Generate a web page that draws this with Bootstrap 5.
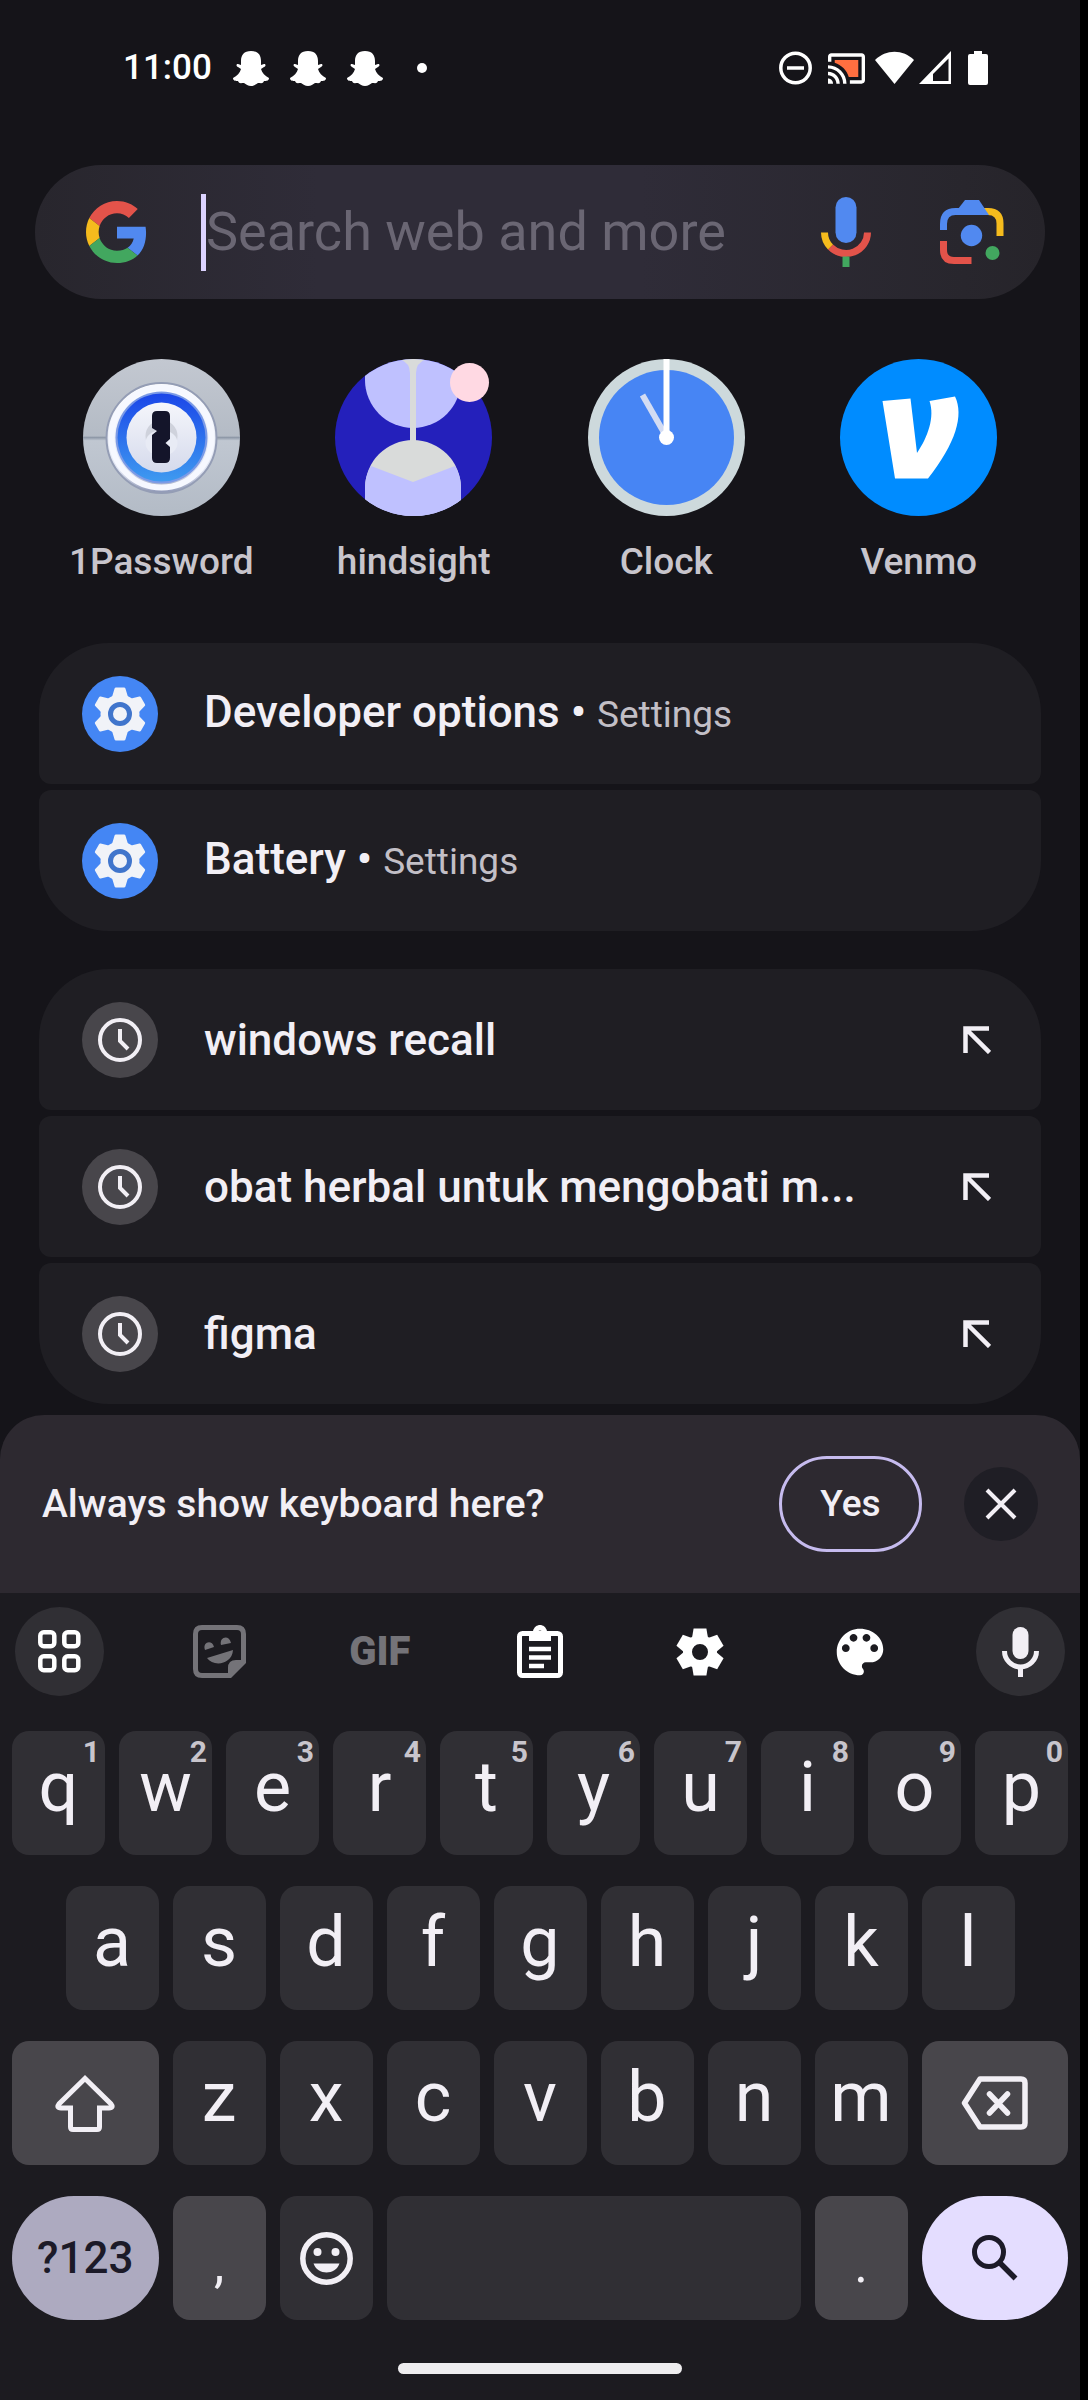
<!DOCTYPE html>
<html lang="en">
<head>
<meta charset="utf-8">
<meta name="viewport" content="width=device-width, initial-scale=1">
<title>Phone search</title>
<link href="https://cdn.jsdelivr.net/npm/bootstrap@5.3.0/dist/css/bootstrap.min.css" rel="stylesheet">
<style>
body { background: #000; color: #f2eff5; font-family: Roboto, "Noto Sans", sans-serif; }
svg { display: block; flex: none; }
button { border: 0; color: inherit; padding: 0; }
.device { background: #151419; margin-right: 8px; min-height: 100vh; }
.statusbar { height: 136px; padding: 0 92px 0 123px; color: #fff; }
.clock-text { font-size: 35px; font-weight: 500; line-height: 40px; }
.notices { gap: 21px; }
.status-dot { width: 10px; height: 10px; margin-left: 13px; background: #fff; }
.gutter { padding-left: 35px; padding-right: 35px; }
.searchbar { margin-top: 29px; height: 134px; padding: 0 41px 0 51px; background: linear-gradient(90deg, #28262d, #2f2c38 28%, #2f2c38 60%, #28262d 92%, #26242a); }
.caret { width: 5px; height: 77px; margin-left: 53px; background: #dcd3ff; flex: none; }
.searchbar input { background: none; border: 0; outline: 0; padding: 0; min-width: 0; font-size: 54px; line-height: 70px; color: #f2eff5; }
.searchbar input::placeholder { color: #6a6673; opacity: 1; }
.search-tools { gap: 69px; }
.apps { padding-top: 60px; }
.app-link { color: #c8c5cc; font-size: 37px; font-weight: 500; line-height: 44px; text-decoration: none; }
.app-name { margin-top: 24px; }
.notify { width: 39px; height: 39px; background: #ffd9e3; right: 3px; top: 4px; }
.results { padding: 59px 39px 0; gap: 38px; }
.result-group { gap: 6px; }
.result { background: #1f1e23; color: #f2eff5; height: 141px; padding: 0 50px 0 43px; gap: 46px; border-radius: 12px; font-size: 44px; font-weight: 500; line-height: 60px; text-decoration: none; }
.result-group .result:first-child { border-top-left-radius: 70px; border-top-right-radius: 70px; }
.result-group .result:last-child { border-bottom-left-radius: 70px; border-bottom-right-radius: 70px; }
.origin { color: #c2bfc6; font-size: 37px; font-weight: 400; }
.prompt-bar { margin-top: 11px; height: 178px; padding: 0 42px; background: #2d2930; border-radius: 44px 44px 0 0; font-size: 39px; font-weight: 500; }
.yes-btn { width: 143px; height: 96px; border: 3px solid #c6bbee; border-radius: 48px; background: none; margin-right: 42px; font-size: 37px; font-weight: 500; }
.close-btn { width: 74px; height: 74px; background: #1f1e25; }
.keyboard { background: #1c1b20; }
.tools { padding: 14px 15px 35px; }
.tool-btn { width: 89px; height: 89px; background: none; color: #fff; }
.tool-round { background: #302f34; }
.tool-dim { color: #747378; }
.gif-text { font-size: 40px; font-weight: 900; }
.keys { display: grid; grid-template-columns: repeat(20, minmax(0, 1fr)); gap: 31px 14px; padding: 0 12px; }
.key { grid-column: span 2; height: 124px; border-radius: 17px; background: #302f34; font-size: 70px; line-height: 84px; padding-bottom: 12px; }
.key-indent { grid-column: 2 / span 2; }
.key-first { grid-column: 1 / span 3; }
.key-wide { grid-column: span 3; }
.key-space { grid-column: span 8; }
.key-icon { padding-bottom: 0; }
.key-alt { background: #48464b; }
.key-punct { font-size: 52px; padding: 14px 0 0; }
.key-mode { background: #adaac0; color: #1c1a28; border-radius: 62px; font-size: 44px; font-weight: 500; padding-bottom: 0; }
.key-go { background: #e4ddff; color: #1c1a28; border-radius: 62px; padding-bottom: 0; }
.hint { top: 3px; right: 5px; font-size: 30px; line-height: 36px; font-weight: 700; color: #c8c5cc; }
.home-handle { width: 284px; height: 11px; background: #eeedef; margin: 43px auto 26px; }
</style>
<script src="https://cdn.jsdelivr.net/npm/bootstrap@5.3.0/dist/js/bootstrap.bundle.min.js"></script>
</head>
<body>
<svg width="0" height="0" class="position-absolute" aria-hidden="true">
  <defs>
    <symbol id="ghost" viewBox="0 0 36 35"><path fill="#fff" d="M18 0C11 0 8 4 8 10v4l-3-1c-2 0-2 2 0 3l3 2c-1 4-4 7-8 9 0 3 3 3 5 3 1 3 3 2 6 2 2 1 4 3 7 3s5-2 7-3c3 0 5 1 6-2 2 0 5 0 5-3-4-2-7-5-8-9l3-2c2-1 2-3 0-3l-3 1v-4C28 4 25 0 18 0z"/></symbol>
    <symbol id="gear" viewBox="-24 -24 48 48">
      <circle r="12.500" fill="none" stroke="currentColor" stroke-width="9"/>
      <g fill="currentColor"><path id="tooth" d="M-6.400-23.500H6.400L8-14H-8z"/><use href="#tooth" transform="rotate(60)"/><use href="#tooth" transform="rotate(120)"/><use href="#tooth" transform="rotate(180)"/><use href="#tooth" transform="rotate(240)"/><use href="#tooth" transform="rotate(300)"/></g>
    </symbol>
    <symbol id="settings-app" viewBox="0 0 76 76">
      <circle cx="38" cy="38" r="38" fill="#4486f4"/>
      <g transform="translate(38 38)" fill="#f1f3f8" stroke="#f1f3f8" stroke-linejoin="round" stroke-width="3"><circle r="18"/><path id="cog" d="M-4-25H4L7-15H-7z"/><use href="#cog" transform="rotate(60)"/><use href="#cog" transform="rotate(120)"/><use href="#cog" transform="rotate(180)"/><use href="#cog" transform="rotate(240)"/><use href="#cog" transform="rotate(300)"/></g>
      <circle cx="38" cy="38" r="9.500" fill="#f1f3f8" stroke="#4075cc" stroke-width="5"/>
    </symbol>
    <symbol id="history" viewBox="0 0 76 76"><circle cx="38" cy="38" r="38" fill="#48464b"/><circle cx="38" cy="38" r="20" fill="none" stroke="#f2eff5" stroke-width="4"/><path d="M38 27v12l8 8" fill="none" stroke="#f2eff5" stroke-width="4"/></symbol>
    <symbol id="arrow-nw" viewBox="0 0 28 28"><path d="M2.500 27V2.500H26M2.500 2.500l24 24" fill="none" stroke="#f2eff5" stroke-width="4.500"/></symbol>
  </defs>
</svg>

<div class="device d-flex flex-column">
  <header class="statusbar d-flex align-items-center justify-content-between">
    <div class="notices d-flex align-items-center">
      <span class="clock-text">11:00</span>
      <svg width="36" height="35"><use href="#ghost"/></svg>
      <svg width="36" height="35"><use href="#ghost"/></svg>
      <svg width="36" height="35"><use href="#ghost"/></svg>
      <span class="status-dot rounded-circle"></span>
    </div>
    <div class="d-flex align-items-center">
      <svg width="33" height="34" viewBox="0 0 33 34"><circle cx="16.500" cy="17" r="14.700" fill="none" stroke="#fff" stroke-width="3.500"/><path d="M8 17h17" stroke="#fff" stroke-width="3.500"/></svg>
      <svg class="ms-3" width="37" height="31" viewBox="1 3 22 18"><path fill="#ff6f40" d="M19 7H5v1.630c3.960 1.280 7.090 4.410 8.370 8.370H19V7z"/><path fill="#fff" d="M1 18v3h3c0-1.660-1.340-3-3-3zm0-4v2c2.760 0 5 2.240 5 5h2c0-3.870-3.130-7-7-7zm0-4v2c4.970 0 9 4.030 9 9h2c0-6.080-4.930-11-11-11zm20-7H3c-1.100 0-2 .9-2 2v3h2V5h18v14h-7v2h7c1.100 0 2-.9 2-2V5c0-1.100-.9-2-2-2z"/></svg>
      <svg class="ms-2" width="42" height="34" viewBox="0 0 42 34"><path d="M2 9C13-2 30-2 41 9L21.500 33z" fill="#fff"/></svg>
      <svg class="ms-1" width="33" height="34" viewBox="0 0 33 34"><path fill="#fff" fill-rule="evenodd" d="M0 33 32 0v33zM14 30h15.500V7.500L14 23z"/></svg>
      <svg class="ms-3" width="20" height="34" viewBox="0 0 20 34"><path d="M6 0h8v3h4q2 0 2 2v27q0 2-2 2H2q-2 0-2-2V5q0-2 2-2h4z" fill="#fff"/></svg>
    </div>
  </header>

  <div class="gutter">
    <form class="searchbar d-flex align-items-center rounded-pill">
      <svg width="62" height="62" viewBox="1.500 0 45 48"><path fill="#e3534a" d="M24 9.500c3.540 0 6.710 1.220 9.210 3.600l6.850-6.850C35.900 2.380 30.470 0 24 0 14.620 0 6.510 5.380 2.560 13.220l7.980 6.190C12.430 13.720 17.740 9.500 24 9.500z"/><path fill="#5189f0" d="M46.500 24.550c0-1.570-.15-3.090-.38-4.550H24v9.020h12.940c-.58 2.960-2.260 5.480-4.780 7.180l7.730 6c4.510-4.180 6.610-10.360 6.610-17.650z"/><path fill="#f5bb1d" d="M10.530 28.590c-.48-1.450-.76-2.990-.76-4.590s.27-3.140.76-4.590l-7.980-6.190C.92 16.460 0 20.120 0 24s.92 7.540 2.560 10.780l7.970-6.190z"/><path fill="#42a75f" d="M24 48c6.480 0 11.930-2.130 15.890-5.810l-7.730-6c-2.150 1.450-4.920 2.300-8.160 2.300-6.260 0-11.570-4.220-13.470-9.910l-7.980 6.190C6.510 42.620 14.620 48 24 48z"/></svg>
      <span class="caret"></span>
      <input class="flex-grow-1" type="search" placeholder="Search web and more" aria-label="Search web and more">
      <div class="search-tools d-flex align-items-center">
        <button type="button" class="bg-transparent" aria-label="Voice search">
          <svg width="50" height="70" viewBox="0 0 50 70"><rect x="14.500" width="21" height="46" rx="10.500" fill="#5189f0"/><g fill="none" stroke-width="7"><path d="M46.500 35.500a21.500 21 0 0 1-37 14.500" stroke="#e3534a"/><path d="M3.500 35.500a21.500 21 0 0 0 6 14.500" stroke="#f5bb1d"/><path d="M25 59.500V70" stroke="#42a75f"/></g></svg>
        </button>
        <button type="button" class="bg-transparent" aria-label="Lens">
          <svg width="64" height="64" viewBox="0 0 64 64"><g fill="none" stroke-width="7"><path d="M44 11.500h4q12 0 12 12V36" stroke="#f5bb1d"/><path d="M3.500 41v9q0 10.500 10.500 10.500h17.500" stroke="#e3534a"/><path d="M3.500 30v-6q0-12.500 12-12.500H40" stroke="#5189f0"/></g><path d="M18 9 25 0h14l10 15H18z" fill="#5189f0"/><circle cx="31.500" cy="35.500" r="10.700" fill="#5189f0"/><circle cx="52.500" cy="53" r="7" fill="#42a75f"/></svg>
        </button>
      </div>
    </form>

    <nav class="apps row g-0 text-center" aria-label="Apps">
      <a class="app-link col-3 d-flex flex-column align-items-center" href="#">
        <svg width="157" height="157" viewBox="0 0 157 157">
          <defs>
            <linearGradient id="plate" x2="0" y2="1"><stop offset="0" stop-color="#c3c8d1"/><stop offset=".49" stop-color="#b4bbc5"/><stop offset=".5" stop-color="#8f99a8"/><stop offset=".52" stop-color="#c0c7d1"/><stop offset="1" stop-color="#b3bbc6"/></linearGradient>
            <linearGradient id="rim" x2="0" y2="1"><stop offset="0" stop-color="#fff"/><stop offset=".8" stop-color="#dfe4f2"/><stop offset="1" stop-color="#8e97b5"/></linearGradient>
            <linearGradient id="dial" x2="0" y2="1"><stop offset="0" stop-color="#1b46e8"/><stop offset="1" stop-color="#3e9af0"/></linearGradient>
            <linearGradient id="face" x2="0" y2="1"><stop offset="0" stop-color="#f5f6fb"/><stop offset="1" stop-color="#d5daec"/></linearGradient>
          </defs>
          <circle cx="78.500" cy="78.500" r="78.500" fill="url(#plate)"/>
          <circle cx="78.500" cy="79" r="55" fill="url(#rim)" stroke="#949db5" stroke-width="2"/>
          <circle cx="78.500" cy="78.500" r="50" fill="none" stroke="#f6f8ff" stroke-width="6"/>
          <circle cx="78.500" cy="78.500" r="46" fill="#7b9ae6"/>
          <circle cx="78.500" cy="78.500" r="44" fill="url(#dial)"/>
          <circle cx="78.500" cy="78.500" r="35" fill="url(#face)"/>
          <circle cx="78.500" cy="77" r="16" fill="#cfd2dc"/><ellipse cx="78.500" cy="84" rx="16" ry="13" fill="#e8ebf5"/>
          <path fill="#14152a" d="M74 52h8q5 0 5 5v23l-4.500 4L87 88v11q0 5-5 5h-8q-5 0-5-5V76l5-4-5-3V57q0-5 5-5z"/>
        </svg>
        <span class="app-name">1Password</span>
      </a>
      <a class="app-link col-3 d-flex flex-column align-items-center" href="#">
        <span class="position-relative">
          <svg width="157" height="157" viewBox="0 0 157 157">
            <clipPath id="disc"><circle cx="78.500" cy="78.500" r="78.500"/></clipPath>
            <g clip-path="url(#disc)"><path fill="#2420bb" d="M0 0h157v157H0z"/><path fill="#bfc1ff" d="M30 0h96v21a48 48 0 0 1-96 0z"/><path fill="#d9dbda" d="M65 0h26q-10 4-10 14v74h-6V14Q75 4 65 0z"/><path fill="#d9dbda" d="M30 157v-28a48 48 0 0 1 96 0v28z"/><path fill="#bfc1ff" d="M36 107l42 16 42-16q6 10 6 22v28H30v-28q0-12 6-22z"/></g>
          </svg>
          <span class="notify position-absolute rounded-circle"></span>
        </span>
        <span class="app-name">hindsight</span>
      </a>
      <a class="app-link col-3 d-flex flex-column align-items-center" href="#">
        <svg width="157" height="157" viewBox="0 0 157 157"><circle cx="78.500" cy="78.500" r="78.500" fill="#cdd9dc"/><circle cx="78.500" cy="78.500" r="67.500" fill="#4785f4"/><path d="M78.500 78 54.500 36" stroke="#d3dcf3" stroke-width="6"/><path d="M78.500 0v78" stroke="#fff" stroke-width="6"/><circle cx="78.500" cy="78.500" r="7.500" fill="#fff"/></svg>
        <span class="app-name">Clock</span>
      </a>
      <a class="app-link col-3 d-flex flex-column align-items-center" href="#">
        <svg width="157" height="157" viewBox="0 0 157 157"><circle cx="78.500" cy="78.500" r="78.500" fill="#008cff"/><path fill="#fff" d="M42.500 42l28-2.500L77 94c11-16 18-36 12.500-52L115 37.500C124 56 116 84 88 119.500H55z"/></svg>
        <span class="app-name">Venmo</span>
      </a>
    </nav>
  </div>

  <main class="results d-flex flex-column">
    <div class="result-group d-flex flex-column">
      <a class="result d-flex align-items-center" href="#"><svg width="76" height="76"><use href="#settings-app"/></svg><span>Developer options • <span class="origin">Settings</span></span></a>
      <a class="result d-flex align-items-center" href="#"><svg width="76" height="76"><use href="#settings-app"/></svg><span>Battery • <span class="origin">Settings</span></span></a>
    </div>
    <div class="result-group d-flex flex-column">
      <a class="result d-flex align-items-center" href="#"><svg width="76" height="76"><use href="#history"/></svg><span class="flex-grow-1">windows recall</span><svg width="28" height="28"><use href="#arrow-nw"/></svg></a>
      <a class="result d-flex align-items-center" href="#"><svg width="76" height="76"><use href="#history"/></svg><span class="flex-grow-1">obat herbal untuk mengobati m...</span><svg width="28" height="28"><use href="#arrow-nw"/></svg></a>
      <a class="result d-flex align-items-center" href="#"><svg width="76" height="76"><use href="#history"/></svg><span class="flex-grow-1">figma</span><svg width="28" height="28"><use href="#arrow-nw"/></svg></a>
    </div>
  </main>

  <section class="prompt-bar d-flex align-items-center">
    <span class="flex-grow-1">Always show keyboard here?</span>
    <button type="button" class="yes-btn">Yes</button>
    <button type="button" class="close-btn rounded-circle d-flex align-items-center justify-content-center" aria-label="Close"><svg width="32" height="32" viewBox="0 0 32 32"><path d="M2 2l28 28M30 2 2 30" stroke="#f2eff5" stroke-width="4"/></svg></button>
  </section>

  <section class="keyboard flex-grow-1">
    <div class="tools d-flex justify-content-between">
      <button type="button" class="tool-btn tool-round rounded-circle d-flex align-items-center justify-content-center" aria-label="Menu"><svg width="43" height="43" viewBox="0 0 43 43"><g fill="none" stroke="#fff" stroke-width="4.500"><rect x="2.300" y="2.300" width="14" height="14" rx="3.500"/><rect x="26.300" y="2.300" width="14" height="14" rx="3.500"/><rect x="2.300" y="26.300" width="14" height="14" rx="3.500"/><rect x="26.300" y="26.300" width="14" height="14" rx="3.500"/></g></svg></button>
      <button type="button" class="tool-btn tool-dim d-flex align-items-center justify-content-center" aria-label="Stickers"><svg width="53" height="53" viewBox="0 0 53 53"><path d="M37 50.500H9q-6.500 0-6.500-6.500V9q0-6.500 6.500-6.500h35q6.500 0 6.500 6.500v28z" fill="none" stroke="currentColor" stroke-width="5"/><path d="M35 53V43q0-8 8-8h10L37 53zM12 25c-3-8 7-11 9-3zM28 20c-2-8 8-11 10-2zM14 33l26-8c-1 15-20 17-26 8z" fill="currentColor"/></svg></button>
      <button type="button" class="tool-btn tool-dim gif-text">GIF</button>
      <button type="button" class="tool-btn d-flex align-items-center justify-content-center" aria-label="Clipboard"><svg width="46" height="53" viewBox="0 0 46 53"><rect x="2.500" y="8.500" width="41" height="42" rx="3" fill="none" stroke="#fff" stroke-width="5"/><path fill="#fff" fill-rule="evenodd" d="M12 6h4C18-2 28-2 30 6h4v10H12zM20.500 8a2.500 2.500 0 1 0 5 0 2.500 2.500 0 0 0-5 0z"/><path d="M12 24h22M12 32.500h22M12 41h15" stroke="#fff" stroke-width="4.500"/></svg></button>
      <button type="button" class="tool-btn d-flex align-items-center justify-content-center" aria-label="Settings"><svg width="48" height="48"><use href="#gear"/></svg></button>
      <button type="button" class="tool-btn d-flex align-items-center justify-content-center" aria-label="Theme"><svg width="62" height="62" viewBox="0 0 24 24"><path fill="#fff" d="M12 3c-4.970 0-9 4.030-9 9s4.030 9 9 9c.83 0 1.500-.67 1.500-1.500 0-.39-.15-.74-.39-1.010-.23-.26-.38-.61-.38-.99 0-.83.67-1.500 1.500-1.500H16c2.760 0 5-2.240 5-5 0-4.420-4.030-8-9-8zm-5.500 9c-.83 0-1.500-.67-1.500-1.500S5.670 9 6.500 9 8 9.670 8 10.500 7.330 12 6.500 12zm3-4C8.670 8 8 7.330 8 6.500S8.670 5 9.500 5s1.500.67 1.500 1.500S10.330 8 9.500 8zm5 0c-.83 0-1.500-.67-1.500-1.500S13.670 5 14.500 5s1.500.67 1.500 1.500S15.330 8 14.500 8zm3 4c-.83 0-1.500-.67-1.500-1.500S16.670 9 17.500 9s1.500.67 1.500 1.500-.67 1.500-1.500 1.500z"/></svg></button>
      <button type="button" class="tool-btn tool-round rounded-circle d-flex align-items-center justify-content-center" aria-label="Voice typing"><svg width="37" height="50" viewBox="0 0 37 50"><rect x="10.500" width="16" height="32" rx="8" fill="#f2eff5"/><path d="M2.500 24a16 16 0 0 0 32 0M18.500 40v10" fill="none" stroke="#f2eff5" stroke-width="5"/></svg></button>
    </div>

    <div class="keys">
      <button type="button" class="key position-relative">q<span class="hint position-absolute">1</span></button>
      <button type="button" class="key position-relative">w<span class="hint position-absolute">2</span></button>
      <button type="button" class="key position-relative">e<span class="hint position-absolute">3</span></button>
      <button type="button" class="key position-relative">r<span class="hint position-absolute">4</span></button>
      <button type="button" class="key position-relative">t<span class="hint position-absolute">5</span></button>
      <button type="button" class="key position-relative">y<span class="hint position-absolute">6</span></button>
      <button type="button" class="key position-relative">u<span class="hint position-absolute">7</span></button>
      <button type="button" class="key position-relative">i<span class="hint position-absolute">8</span></button>
      <button type="button" class="key position-relative">o<span class="hint position-absolute">9</span></button>
      <button type="button" class="key position-relative">p<span class="hint position-absolute">0</span></button>

      <button type="button" class="key key-indent">a</button>
      <button type="button" class="key">s</button>
      <button type="button" class="key">d</button>
      <button type="button" class="key">f</button>
      <button type="button" class="key">g</button>
      <button type="button" class="key">h</button>
      <button type="button" class="key">j</button>
      <button type="button" class="key">k</button>
      <button type="button" class="key">l</button>

      <button type="button" class="key key-first key-alt key-icon d-flex align-items-center justify-content-center" aria-label="Shift"><svg width="60" height="58" viewBox="0 0 60 58"><path d="M30 4.500 4 30q-3 4 2 4h9.500v19q0 2.500 2.500 2.500h24q2.500 0 2.500-2.500V34H54q5 0 2-4z" fill="none" stroke="#f2eff5" stroke-width="5"/></svg></button>
      <button type="button" class="key">z</button>
      <button type="button" class="key">x</button>
      <button type="button" class="key">c</button>
      <button type="button" class="key">v</button>
      <button type="button" class="key">b</button>
      <button type="button" class="key">n</button>
      <button type="button" class="key">m</button>
      <button type="button" class="key key-wide key-alt key-icon d-flex align-items-center justify-content-center" aria-label="Backspace"><svg width="67" height="54" viewBox="0 0 67 54"><path d="M19 3h41q4 0 4 4v40q0 4-4 4H19L3.500 27z" fill="none" stroke="#f2eff5" stroke-width="5.500" stroke-linejoin="round"/><path d="M28.500 18 46.500 37M46.500 18 28.500 37" stroke="#f2eff5" stroke-width="5.500" stroke-linecap="round"/></svg></button>

      <button type="button" class="key key-first key-mode">?123</button>
      <button type="button" class="key key-alt key-punct">,</button>
      <button type="button" class="key key-icon d-flex align-items-center justify-content-center" aria-label="Emoji"><svg width="53" height="53" viewBox="0 0 53 53"><circle cx="26.500" cy="26.500" r="23.700" fill="none" stroke="#f2eff5" stroke-width="5.500"/><g fill="#f2eff5"><circle cx="17.500" cy="20" r="4"/><circle cx="35.500" cy="20" r="4"/><path d="M13.500 31.500h26c-4 12-22 12-26 0z"/></g></svg></button>
      <button type="button" class="key key-space" aria-label="Space"></button>
      <button type="button" class="key key-alt key-punct">.</button>
      <button type="button" class="key key-wide key-go d-flex align-items-center justify-content-center" aria-label="Search"><svg width="46" height="46" viewBox="0 0 46 46"><circle cx="17" cy="17" r="14.500" fill="none" stroke="#1c1a28" stroke-width="5"/><path d="M28 28 43.500 43.500" stroke="#1c1a28" stroke-width="5.500"/></svg></button>
    </div>
    <div class="home-handle rounded-pill"></div>
  </section>
</div>
</body>
</html>
